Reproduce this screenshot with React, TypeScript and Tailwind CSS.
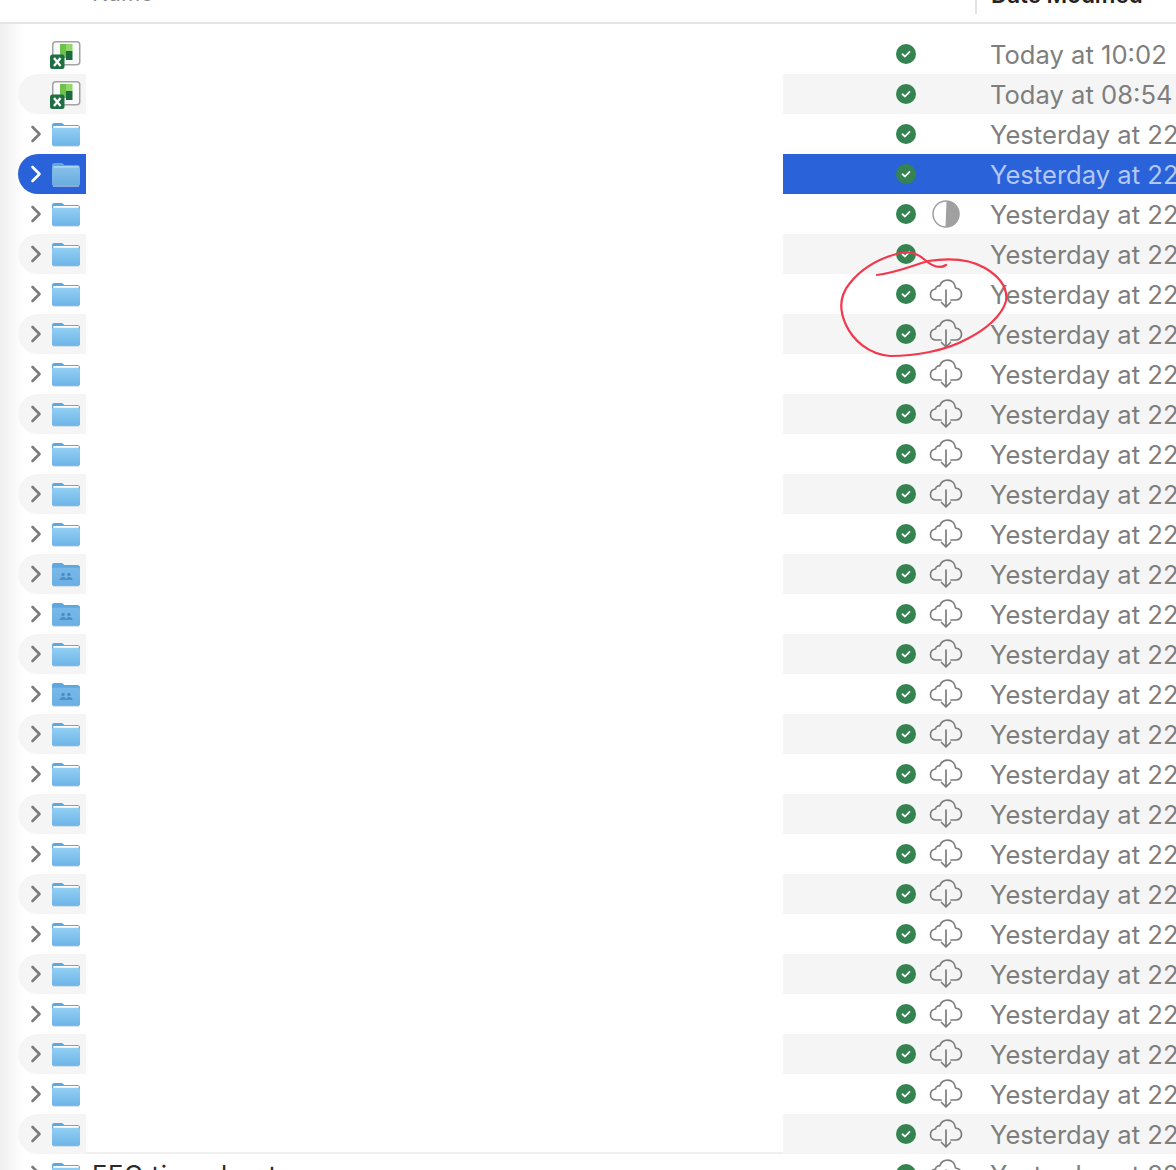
import React from 'react';

type Status = 'none' | 'partial' | 'cloud';

const SANS = 'font-["Inter",sans-serif]';

const FolderIcon: React.FC<{ shared?: boolean; selected?: boolean }> = ({ shared, selected }) => {
  const gradId = selected ? 'folderSel' : shared ? 'folderShared' : 'folderBody';
  return (
    <svg width="30" height="26" viewBox="0 0 30 26">
      <defs>
        <linearGradient id={gradId} x1="0" y1="0" x2="0" y2="1">
          <stop offset="0" stopColor={selected ? '#84bfe9' : shared ? '#78b9e8' : '#93cff3'} />
          <stop offset="1" stopColor={selected ? '#69acdf' : shared ? '#6aafe3' : '#6db4e8'} />
        </linearGradient>
      </defs>
      <path d="M1 4.500C1 2.800 2 2 3.200 2h7c1 0 1.500.4 2.200 1.100l.8.900H26.500C28 4 29 5 29 6.500V22.500C29 24 28 25 26.500 25H3.500C2 25 1 24 1 22.500Z" fill="#5da8df" />
      {!shared && <rect x="2" y="5" width="26" height="2" rx="1" fill={selected ? '#a9d3ef' : '#ffffff'} />}
      <path d="M1 8.500C1 7.500 1.800 6.800 2.800 6.800H27.200C28.200 6.800 29 7.500 29 8.500V22.500C29 24 28 25 26.500 25H3.500C2 25 1 24 1 22.500Z" fill={`url(#${gradId})`} />
      <path d="M2 25.300H28" stroke="#c4d6e4" strokeWidth="0.800" />
      {shared && (
        <g fill="#4b8fc6">
          <circle cx="12" cy="13.500" r="1.700" />
          <circle cx="18" cy="13.500" r="1.700" />
          <path d="M8.500 19c0-2 1.500-3 3.500-3s3 1 3 3Z" />
          <path d="M15 19c0-2 1-3 3-3s3.500 1 3.500 3Z" />
        </g>
      )}
    </svg>
  );
};

const ExcelIcon: React.FC = () => (
  <svg className="-ml-[2px]" width="32" height="30" viewBox="0 -2 32 30">
    <rect x="3.750" y="0.750" width="27" height="23" rx="3" fill="#fafafa" stroke="#a3a3a3" strokeWidth="1.500" />
    <rect x="11" y="3" width="6" height="14" fill="#6cc24a" />
    <rect x="17" y="3" width="6.500" height="7" fill="#90d86e" />
    <rect x="17" y="10" width="6.500" height="9" fill="#1d6b3c" />
    <rect x="1" y="13.500" width="14.500" height="14.500" rx="2.500" fill="#1f6f43" />
    <path d="M5 17 11.500 25M11.500 17 5 25" stroke="#ffffff" strokeWidth="2.300" fill="none" />
  </svg>
);

const SyncedBadge: React.FC = () => (
  <div className="flex h-5 w-5 items-center justify-center rounded-full bg-[#348350]">
    <svg width="12" height="12" viewBox="0 0 12 12" fill="none">
      <path d="M2.500 6.300 5 8.500 9.500 3.800" stroke="#ffffff" strokeWidth="1.800" strokeLinecap="round" strokeLinejoin="round" />
    </svg>
  </div>
);

const CloudIcon: React.FC = () => (
  <svg width="34" height="30" viewBox="0 0 34 30" fill="none" stroke="#7d7d7d" strokeWidth="1.700" strokeLinecap="round" strokeLinejoin="round">
    <path d="M12 21H7C3.500 21 1.500 18.500 1.500 15.500C1.500 12.500 3.500 10.500 6.500 10C7 7.500 9 6.500 10.500 7C12 3.500 15 1.200 18.500 1.200C23 1.200 26 4.500 26.500 9C30 9.500 32.500 12 32.500 15.500C32.500 18.500 30 21 27 21H22" />
    <path d="M17 11V28M12.500 23.500 17 28 21.500 23.500" />
  </svg>
);

const PartialIcon: React.FC = () => (
  <svg width="28" height="28" viewBox="0 0 28 28">
    <circle cx="14" cy="14" r="13" fill="#ffffff" stroke="#a0a0a0" strokeWidth="1.500" />
    <path d="M14.500 1A13 13 0 0 1 14 27L13.500 27Z" fill="#a0a0a0" />
  </svg>
);

const Chevron: React.FC<{ selected?: boolean }> = ({ selected }) => (
  <svg width="12" height="18" viewBox="0 0 12 18" fill="none">
    <path d="M2.500 2 9.500 9 2.500 16" stroke={selected ? '#ffffff' : '#7b7b7b'} strokeWidth="2.600" strokeLinecap="round" strokeLinejoin="round" />
  </svg>
);

type RowData = {
  kind: 'excel' | 'folder' | 'shared';
  date: string;
  status: Status;
  name?: string;
};

const YESTERDAY = 'Yesterday at 22:41';

const rows: RowData[] = Array.from({ length: 29 }, (_, i): RowData => {
  let kind: RowData['kind'] = 'folder';
  if (i < 2) kind = 'excel';
  if (i === 13 || i === 14 || i === 16) kind = 'shared';
  let date = YESTERDAY;
  if (i === 0) date = 'Today at 10:02';
  if (i === 1) date = 'Today at 08:54';
  let status: Status = 'cloud';
  if (i < 6) status = i === 4 ? 'partial' : 'none';
  return { kind, date, status, name: i === 28 ? 'FEC timesheets' : undefined };
});

const Row: React.FC<{ row: RowData; index: number }> = ({ row, index }) => {
  const selected = index === 3;
  const striped = index % 2 === 1;
  const fill = selected ? 'bg-[#2962d9]' : striped ? 'bg-[#f4f5f4]' : '';
  return (
    <div className="flex h-10 shrink-0 pl-[18px]">
      <div className={`flex w-[68px] shrink-0 items-center rounded-l-[20px] ${fill}`}>
        <div className="flex w-[33px] shrink-0 justify-end pr-[9px]">
          {row.kind !== 'excel' && <Chevron selected={selected} />}
        </div>
        {row.kind === 'excel' ? <ExcelIcon /> : <FolderIcon shared={row.kind === 'shared'} selected={selected} />}
      </div>
      <div className={`flex w-[697px] shrink-0 items-center bg-white pl-[6px] text-[25.6px] tracking-[0.8px] text-[#2a2a2a] ${index === 27 ? 'border-b-2 border-[#f0f0f0]' : ''}`}>
        <span className="mt-[2px]">{row.name}</span>
      </div>
      <div className={`flex flex-1 items-center overflow-hidden whitespace-nowrap ${fill}`}>
        <div className="ml-[113px] shrink-0"><SyncedBadge /></div>
        <div className="flex w-[74px] shrink-0 justify-center pr-[14px]">
          {row.status === 'cloud' && <CloudIcon />}
          {row.status === 'partial' && <PartialIcon />}
        </div>
        <span className={`mt-[2px] text-[25.6px] ${selected ? 'text-[#b4c8f4]' : 'text-[#7e7e7e]'}`}>{row.date}</span>
      </div>
    </div>
  );
};

const App: React.FC = () => {
  return (
    <div className={`relative h-[1170px] w-[1176px] overflow-hidden bg-[linear-gradient(90deg,#efefef_0px,#ffffff_24px)] ${SANS}`}>
      <div className="flex h-[24px] overflow-hidden border-b-2 border-[#e3e3e3] bg-white">
        <div className="ml-[92px] -mt-[23px] w-[883px] text-[22px] text-[#8a8a8a]">Name</div>
        <div className="h-[14px] border-l-2 border-[#e3e3e3] pl-[14px]">
          <div className="-mt-[22px] text-[22.4px] font-semibold text-[#222222]">Date Modified</div>
        </div>
      </div>
      <div className="flex flex-col pt-[10px]">
        {rows.map((row, i) => (
          <Row key={i} row={row} index={i} />
        ))}
      </div>
      {/* hand drawn annotation */}
      <svg className="absolute left-0 top-0" width="1176" height="1170" fill="none">
        <path
          d="M877 275C895 273 912 266 928 261C948 258 968 258 985 268C1000 277 1008 288 1006 301C1002 316 985 330 967 339C945 351 915 356 890 356C868 354 853 340 846 325C838 308 840 295 850 283C862 268 880 258 900 253C912 251 918 254 925 260C932 266 940 269 946 265"
          stroke="#f2384c"
          strokeWidth="2.200"
          strokeLinecap="round"
        />
      </svg>
    </div>
  );
};

export default App;
